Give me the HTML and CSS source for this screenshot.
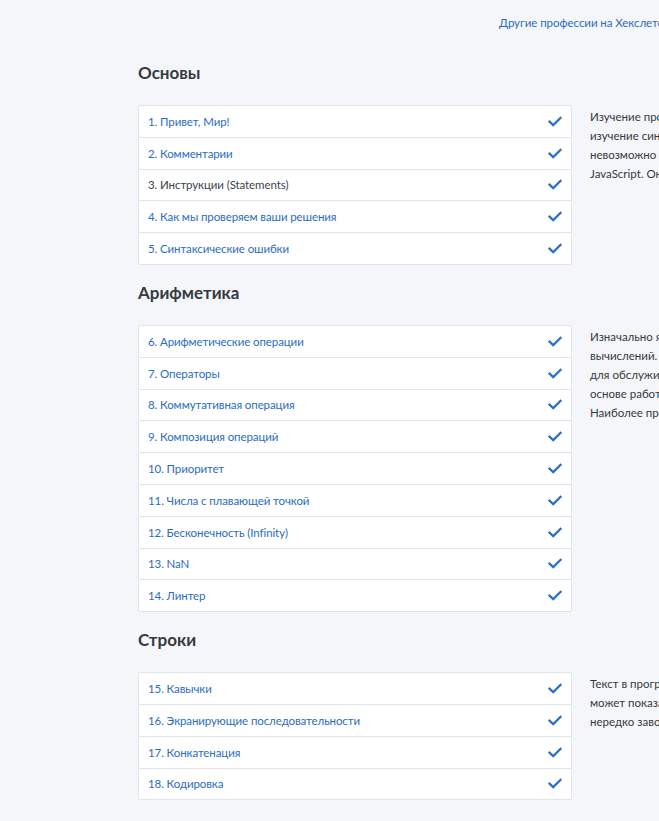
FILE: index.html
```html
<!DOCTYPE html>
<html lang="ru">
<head>
<meta charset="utf-8">
<link rel="stylesheet" href="styles.css">
</head>
<body>
<svg width="0" height="0" class="defs">
  <symbol id="chk" viewBox="0 0 14 11"><path d="M1.5 5.6 L5.2 9.1 L12.6 1.8" fill="none" stroke="currentColor" stroke-width="2.2" stroke-linecap="square"/></symbol>
</svg>
<div class="page">
  <header class="top">
    <a class="top-link" href="#">Другие профессии на Хекслете</a>
  </header>

  <section class="module">
    <h2 class="title">Основы</h2>
    <div class="row">
      <ul class="lessons">
        <li><a href="#">1. Привет, Мир!</a><svg class="check"><use href="#chk"/></svg></li>
        <li><a href="#">2. Комментарии</a><svg class="check"><use href="#chk"/></svg></li>
        <li><a href="#" class="visited">3. Инструкции (Statements)</a><svg class="check"><use href="#chk"/></svg></li>
        <li><a href="#">4. Как мы проверяем ваши решения</a><svg class="check"><use href="#chk"/></svg></li>
        <li><a href="#">5. Синтаксические ошибки</a><svg class="check"><use href="#chk"/></svg></li>
      </ul>
      <p class="desc">Изучение программирования всегда начинается с<br>изучение синтаксиса языка, без этого шага двигаться дальше<br>невозможно в принципе. Мы начнём с основ языка<br>JavaScript. Она поможет понять, как устроены программы.</p>
    </div>
  </section>

  <section class="module">
    <h2 class="title">Арифметика</h2>
    <div class="row">
      <ul class="lessons">
        <li><a href="#">6. Арифметические операции</a><svg class="check"><use href="#chk"/></svg></li>
        <li><a href="#">7. Операторы</a><svg class="check"><use href="#chk"/></svg></li>
        <li><a href="#">8. Коммутативная операция</a><svg class="check"><use href="#chk"/></svg></li>
        <li><a href="#">9. Композиция операций</a><svg class="check"><use href="#chk"/></svg></li>
        <li><a href="#">10. Приоритет</a><svg class="check"><use href="#chk"/></svg></li>
        <li><a href="#">11. Числа с плавающей точкой</a><svg class="check"><use href="#chk"/></svg></li>
        <li><a href="#">12. Бесконечность (Infinity)</a><svg class="check"><use href="#chk"/></svg></li>
        <li><a href="#">13. NaN</a><svg class="check"><use href="#chk"/></svg></li>
        <li><a href="#">14. Линтер</a><svg class="check"><use href="#chk"/></svg></li>
      </ul>
      <p class="desc">Изначально языки программирования создавались для<br>вычислений. Первые компьютеры использовались<br>для обслуживания расчётов, и арифметика лежит в<br>основе работы любой программы.<br>Наиболее простые операции мы и рассмотрим.</p>
    </div>
  </section>

  <section class="module">
    <h2 class="title">Строки</h2>
    <div class="row">
      <ul class="lessons">
        <li><a href="#">15. Кавычки</a><svg class="check"><use href="#chk"/></svg></li>
        <li><a href="#">16. Экранирующие последовательности</a><svg class="check"><use href="#chk"/></svg></li>
        <li><a href="#">17. Конкатенация</a><svg class="check"><use href="#chk"/></svg></li>
        <li><a href="#">18. Кодировка</a><svg class="check"><use href="#chk"/></svg></li>
      </ul>
      <p class="desc">Текст в программировании называется строками. Это<br>может показаться простым, но работа со строками<br>нередко заводит новичков в тупик.</p>
    </div>
  </section>
</div>
</body>
</html>
```

FILE: styles.css
```css
html, body {
  margin: 0;
  padding: 0;
  background: #f5f6f9;
  overflow-x: hidden;
}
body {
  font-family: "Lato", "Open Sans", sans-serif;
  color: #343a40;
}
.defs { position: absolute; }
.page {
  width: 900px;
  padding-left: 138px;
}
.top {
  padding-top: 11px;
  height: 20px;
  padding-left: 361px;
}
.top-link {
  font-size: 11.5px;
  letter-spacing: -0.05px;
  color: #2b6cc0;
  text-decoration: none;
  white-space: nowrap;
}
.title {
  margin: 0;
  font-size: 17px;
  font-weight: 700;
  line-height: 22px;
  color: #343a40;
}
.module:first-of-type .title { margin-top: 31px; }
.module + .module .title { margin-top: 17px; }
.row {
  display: flex;
  gap: 18px;
  margin-top: 21px;
  align-items: flex-start;
}
.lessons {
  list-style: none;
  margin: 0;
  padding: 0;
  width: 432px;
  flex: none;
  background: #fff;
  border: 1px solid #e1e4e8;
  border-radius: 2px;
}
.lessons li {
  display: flex;
  align-items: center;
  justify-content: space-between;
  height: 30.8px;
  padding: 0 9px 0 9px;
  border-top: 1px solid #e1e4e8;
}
.lessons li:first-child { border-top: none; }
.lessons a {
  font-size: 11.5px;
  letter-spacing: -0.1px;
  color: #2b6cc0;
  text-decoration: none;
}
.lessons a.visited { color: #3a4450; }
.check {
  width: 14px;
  height: 11px;
  color: #2d6fc7;
  flex: none;
}
.desc {
  margin: 0;
  padding-top: 2px;
  width: 320px;
  flex: none;
  font-size: 11.5px;
  line-height: 19px;
  color: #343a40;
  white-space: nowrap;
}
```
